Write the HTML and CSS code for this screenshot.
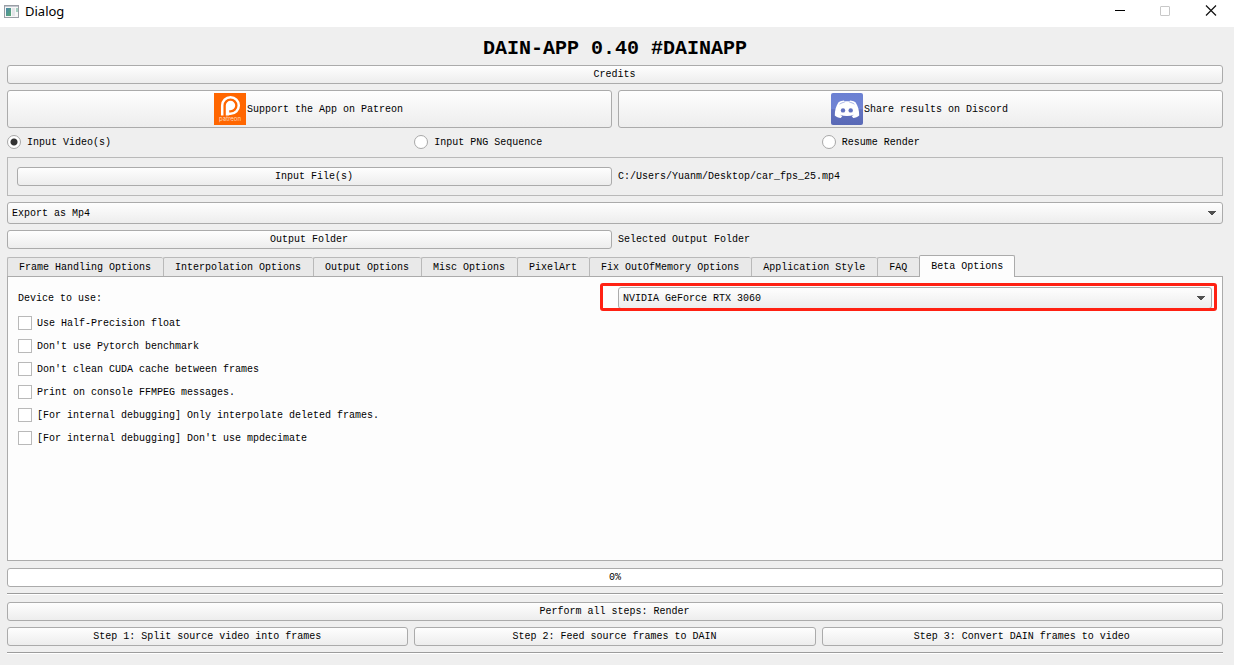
FILE: index.html
```html
<!DOCTYPE html>
<html lang="en">
<head>
<meta charset="utf-8">
<title>Dialog</title>
<link rel="stylesheet" href="styles.css">
</head>
<body>
<header class="titlebar">
  <svg class="app-icon" width="15" height="13" viewBox="0 0 15 13" aria-hidden="true">
    <defs><linearGradient id="scr" x1="0" y1="0" x2="1" y2="1"><stop offset="0" stop-color="#4a86a8"/><stop offset="1" stop-color="#5bab74"/></linearGradient></defs>
    <rect x=".5" y=".5" width="14" height="12" fill="#f7f7f7" stroke="#9a9ea5"/>
    <rect x="1" y="1" width="13" height="1" fill="#c3c7cf"/>
    <rect x="2" y="3" width="5" height="8" fill="url(#scr)"/>
    <rect x="8" y="3" width="3" height="8" fill="#e3e5e8"/>
    <rect x="12" y="3" width="2" height="4" fill="#a5cfc0"/>
  </svg>
  <span class="window-title">Dialog</span>
  <div class="window-controls">
    <button class="win-btn" aria-label="Minimize"><svg width="12" height="12" viewBox="0 0 12 12"><path d="M2 5.500h10" stroke="#000" fill="none"/></svg></button>
    <button class="win-btn" aria-label="Maximize" disabled><svg width="12" height="12" viewBox="0 0 12 12"><rect x="1.5" y="1.500" width="9" height="9" rx=".5" stroke="#c8c8c8" fill="none"/></svg></button>
    <button class="win-btn" aria-label="Close"><svg width="12" height="12" viewBox="0 0 12 12"><path d="M1 .5l10 10M11 .5L1 10.500" stroke="#111" stroke-width="1.2" fill="none"/></svg></button>
  </div>
</header>
<main class="dialog">
  <h1 class="heading">DAIN-APP 0.40 #DAINAPP</h1>
  <button class="btn">Credits</button>
  <div class="cols-2">
    <button class="btn btn-large">
      <svg width="32" height="32" viewBox="0 0 32 32" aria-hidden="true">
        <rect width="32" height="32" fill="#ff6600"/>
        <path d="M8.200 22.500V12.500a8.300 8.300 0 1 1 8.300 8.300H15" fill="none" stroke="#fff" stroke-width="2.500"/>
        <path d="M11.800 22.500V12.500a4.700 4.700 0 1 1 4.700 4.700H15.200V22.500z" fill="#fff"/>
        <text class="logo-text" x="16" y="28" text-anchor="middle">patreon</text>
      </svg>
      <span>Support the App on Patreon</span>
    </button>
    <button class="btn btn-large">
      <svg width="32" height="32" viewBox="0 0 32 32" aria-hidden="true">
        <defs><linearGradient id="disc" x1="0" y1="0" x2="0" y2="1"><stop offset="0" stop-color="#6b80d2"/><stop offset=".5" stop-color="#7084d4"/><stop offset=".52" stop-color="#6272c0"/><stop offset="1" stop-color="#5969b6"/></linearGradient></defs>
        <rect width="32" height="32" rx="2" fill="url(#disc)"/>
        <path d="M7.300 9.400C9.300 8 11.300 7.500 13 7.400l.6 1.100c1.600-.25 3.200-.25 4.800 0l.6-1.100c1.700.1 3.700.6 5.700 2 2.300 3.800 3.600 8 3.500 13-1.600 1.700-3.700 2.300-6 2.500l-1.500-2c.8-.3 1.500-.6 2.200-1.100-4.300 1.600-9.500 1.600-13.800 0 .7.500 1.400.8 2.200 1.100l-1.500 2c-2.300-.2-4.400-.8-6-2.500-.1-5 1.200-9.200 3.500-13z" fill="#fff"/>
        <path d="M8.600 11.200c1.600-1.200 3.200-1.700 5-2M23.400 11.200c-1.600-1.200-3.200-1.700-5-2" stroke="#7084d4" stroke-width=".6" fill="none"/>
        <ellipse cx="12" cy="17.400" rx="2.200" ry="2.200" fill="#6272c0"/>
        <ellipse cx="19.700" cy="17.400" rx="2.200" ry="2.200" fill="#6272c0"/>
      </svg>
      <span>Share results on Discord</span>
    </button>
  </div>
  <div class="cols-3">
    <label class="choice"><input class="radio" type="radio" name="source" checked>Input Video(s)</label>
    <label class="choice"><input class="radio" type="radio" name="source">Input PNG Sequence</label>
    <label class="choice"><input class="radio" type="radio" name="source">Resume Render</label>
  </div>
  <div class="frame cols-2">
    <button class="btn">Input File(s)</button>
    <span>C:/Users/Yuanm/Desktop/car_fps_25.mp4</span>
  </div>
  <div class="combo">
    <select class="select" aria-label="Export format"><option>Export as Mp4</option></select>
    <svg class="arrow" width="8" height="5" viewBox="0 0 8 5" aria-hidden="true"><path d="M0 0h8v1H7v1H6v1H5v1H3V3H2V2H1V1H0z" fill="#505050"/></svg>
  </div>
  <div class="cols-2">
    <button class="btn">Output Folder</button>
    <span>Selected Output Folder</span>
  </div>
  <div class="tabbox">
    <div class="tabs" role="tablist">
      <button class="tab" role="tab">Frame Handling Options</button>
      <button class="tab" role="tab">Interpolation Options</button>
      <button class="tab" role="tab">Output Options</button>
      <button class="tab" role="tab">Misc Options</button>
      <button class="tab" role="tab">PixelArt</button>
      <button class="tab" role="tab">Fix OutOfMemory Options</button>
      <button class="tab" role="tab">Application Style</button>
      <button class="tab" role="tab">FAQ</button>
      <button class="tab tab-active" role="tab" aria-selected="true">Beta Options</button>
    </div>
    <section class="pane" role="tabpanel">
      <div class="cols-2">
        <label for="device">Device to use:</label>
        <div class="combo">
          <select class="select" id="device"><option>NVIDIA GeForce RTX 3060</option></select>
          <svg class="arrow" width="8" height="5" viewBox="0 0 8 5" aria-hidden="true"><path d="M0 0h8v1H7v1H6v1H5v1H3V3H2V2H1V1H0z" fill="#505050"/></svg>
          <div class="highlight"></div>
        </div>
      </div>
      <label class="choice"><input class="check" type="checkbox">Use Half-Precision float</label>
      <label class="choice"><input class="check" type="checkbox">Don't use Pytorch benchmark</label>
      <label class="choice"><input class="check" type="checkbox">Don't clean CUDA cache between frames</label>
      <label class="choice"><input class="check" type="checkbox">Print on console FFMPEG messages.</label>
      <label class="choice"><input class="check" type="checkbox">[For internal debugging] Only interpolate deleted frames.</label>
      <label class="choice"><input class="check" type="checkbox">[For internal debugging] Don't use mpdecimate</label>
    </section>
  </div>
  <div class="progress" role="progressbar" aria-label="Render progress" aria-valuenow="0" aria-valuemin="0" aria-valuemax="100">0%</div>
  <hr class="rule">
  <button class="btn">Perform all steps: Render</button>
  <div class="cols-3">
    <button class="btn">Step 1: Split source video into frames</button>
    <button class="btn">Step 2: Feed source frames to DAIN</button>
    <button class="btn">Step 3: Convert DAIN frames to video</button>
  </div>
  <hr class="rule">
</main>
</body>
</html>
```
FILE: styles.css
```css
* { box-sizing: border-box; }

body {
  margin: 0;
  min-height: 100vh;
  display: flex;
  flex-direction: column;
  background: #efefef;
  color: #000;
  font: 10px/17px "Liberation Mono", monospace;
}

button, select, input { font: inherit; color: inherit; margin: 0; }

.titlebar {
  display: flex;
  align-items: center;
  gap: 6px;
  height: 27px;
  padding: 0 0 5px 4px;
  background: #fff;
}
.window-title { font: 13px/20px "Noto Sans", sans-serif; }
.window-controls { display: flex; margin-left: auto; }
.win-btn {
  display: grid;
  place-items: center;
  width: 46px;
  height: 22px;
  padding: 0;
  border: 0;
  background: none;
}

.dialog {
  flex: 1;
  display: flex;
  flex-direction: column;
  gap: 6px;
  padding: 12px 11px 10px 7px;
}
.heading {
  margin: 0;
  font-size: 20px;
  line-height: 20px;
  font-weight: bold;
  text-align: center;
}

.cols-2, .cols-3 {
  display: grid;
  gap: 6px;
  align-items: center;
}
.cols-2 { grid-template-columns: repeat(2, minmax(0, 1fr)); }
.cols-3 { grid-template-columns: repeat(3, minmax(0, 1fr)); }

.btn, .select, .progress {
  border: 1px solid #ababab;
  border-radius: 3px;
  background: linear-gradient(#fefefe, #ededed);
}
.btn {
  display: flex;
  align-items: center;
  justify-content: center;
  gap: 1px;
  min-height: 19px;
  padding: 0 5px 0 4px;
}
.btn-large { min-height: 38px; padding-right: 6px; }
.logo-text { font: 6px "Inter", sans-serif; fill: #ffd9bd; }

.choice { display: flex; align-items: flex-start; gap: 5px; }
.radio, .check {
  appearance: none;
  width: 14px;
  height: 14px;
  margin-top: 1px;
  border: 1px solid #a8a8a8;
  background: #fff;
}
.radio { border-radius: 50%; }
.radio:checked { background: radial-gradient(circle, #333 3px, #fff 4px); }
.check { border-color: #b9b9b9; }
.choice .radio { margin-right: 1px; }

.frame { padding: 9px; border: 1px solid #b9b9b9; }

.combo { position: relative; display: flex; }
.select {
  appearance: none;
  flex: 1;
  height: 22px;
  padding: 0 20px 0 4px;
}
.arrow { position: absolute; right: 7px; top: 9px; }
.highlight {
  position: absolute;
  inset: -4px -5px -2px -18px;
  border: 3px solid #ff2113;
  border-radius: 3px;
  pointer-events: none;
}

.tabbox { flex: 1; display: flex; flex-direction: column; }
.tabs { display: flex; align-items: flex-end; }
.tab {
  height: 19px;
  padding: 0 12px 0 11px;
  border: 1px solid #b9b9b9;
  border-width: 1px 0 0 1px;
  border-radius: 2px 2px 0 0;
  background: #e9e9e9;
}
.tab-active {
  position: relative;
  height: 22px;
  margin-bottom: -1px;
  border-color: #ababab;
  border-right-width: 1px;
  padding-right: 11px;
  background: #fdfdfd;
}
.pane {
  flex: 1;
  display: flex;
  flex-direction: column;
  gap: 6px;
  margin-bottom: 1px;
  padding: 10px;
  border: 1px solid #ababab;
  background: #fdfdfd;
}

.progress {
  height: 19px;
  background: #fff;
  text-align: center;
}
.rule {
  width: 100%;
  height: 3px;
  margin: 0;
  border: 0;
  border-top: 1px solid #9c9c9c;
  background: linear-gradient(#fff 1px, transparent 1px);
}
```
